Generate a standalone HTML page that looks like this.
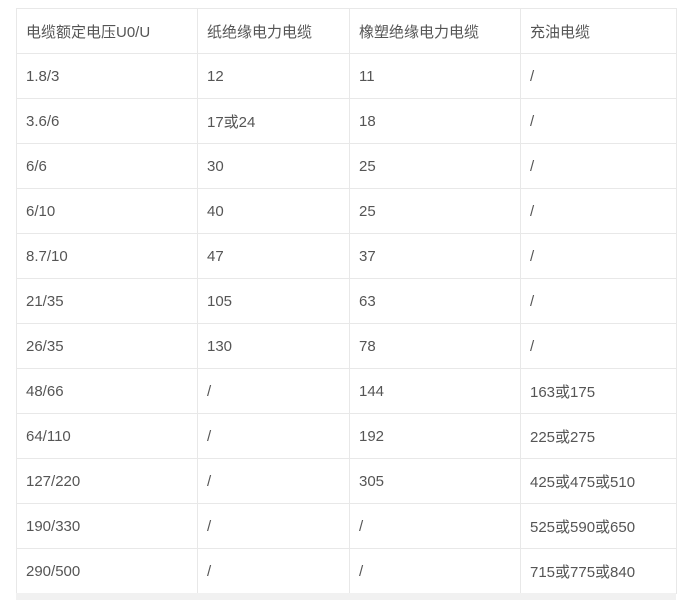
<!DOCTYPE html>
<html><head><meta charset="utf-8"><style>
body{margin:0;background:#fff;width:687px;height:600px;overflow:hidden;position:relative;font-family:"Liberation Sans","Noto Sans CJK SC",sans-serif;}
table{position:absolute;left:16px;top:8px;border-collapse:collapse;table-layout:fixed;width:660px;}
td{border:1px solid #e8e8e8;height:45px;padding:0 0 0 9px;font-size:15px;color:#555;box-sizing:border-box;white-space:nowrap;}
.sb{position:absolute;left:16px;top:593px;width:660px;height:7px;background:#f1f1f1;}
</style></head><body>
<table>
<colgroup><col style="width:181px"><col style="width:152px"><col style="width:171px"><col style="width:156px"></colgroup>
<tr><td>电缆额定电压U0/U</td><td>纸绝缘电力电缆</td><td>橡塑绝缘电力电缆</td><td>充油电缆</td></tr>
<tr><td>1.8/3</td><td>12</td><td>11</td><td>/</td></tr>
<tr><td>3.6/6</td><td>17或24</td><td>18</td><td>/</td></tr>
<tr><td>6/6</td><td>30</td><td>25</td><td>/</td></tr>
<tr><td>6/10</td><td>40</td><td>25</td><td>/</td></tr>
<tr><td>8.7/10</td><td>47</td><td>37</td><td>/</td></tr>
<tr><td>21/35</td><td>105</td><td>63</td><td>/</td></tr>
<tr><td>26/35</td><td>130</td><td>78</td><td>/</td></tr>
<tr><td>48/66</td><td>/</td><td>144</td><td>163或175</td></tr>
<tr><td>64/110</td><td>/</td><td>192</td><td>225或275</td></tr>
<tr><td>127/220</td><td>/</td><td>305</td><td>425或475或510</td></tr>
<tr><td>190/330</td><td>/</td><td>/</td><td>525或590或650</td></tr>
<tr><td>290/500</td><td>/</td><td>/</td><td>715或775或840</td></tr>
</table>
<div class="sb"></div>
</body></html>
